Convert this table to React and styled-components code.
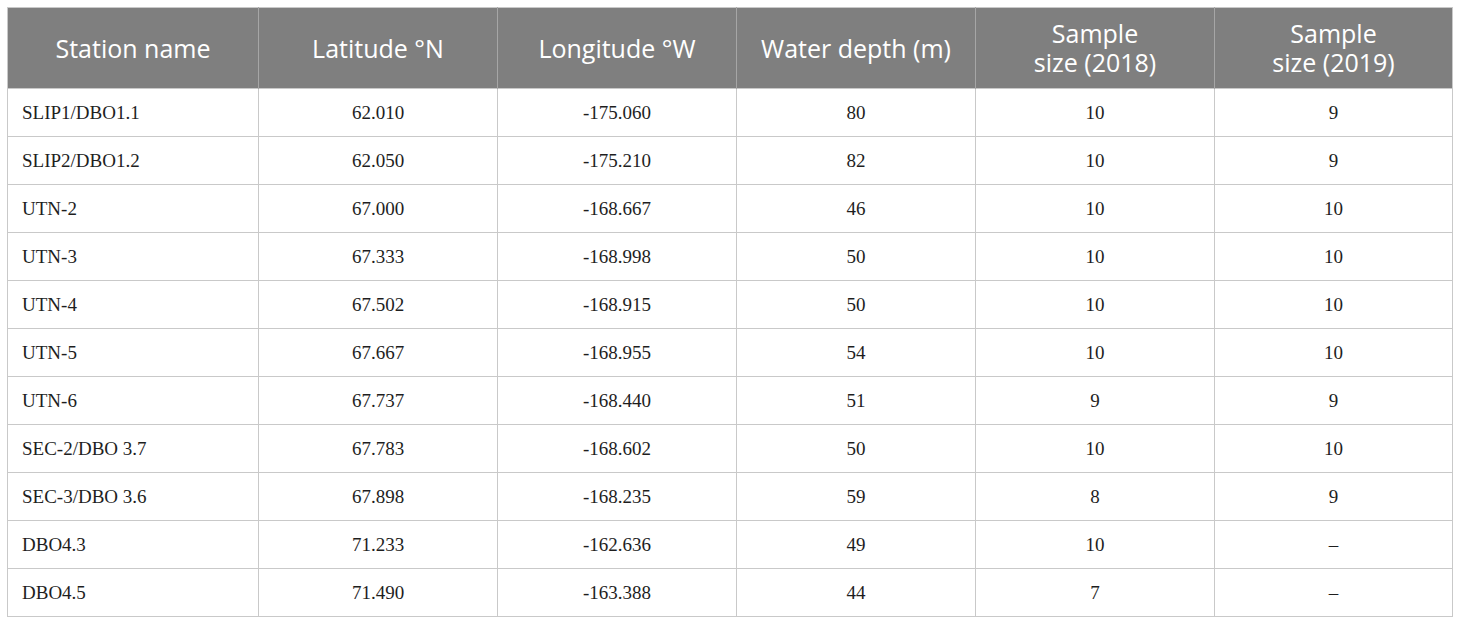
import styled, { createGlobalStyle } from "styled-components";

const GlobalStyle = createGlobalStyle`
    body {
        margin: 0;
        background: #ffffff;
    }
`

const rows = [
    ["SLIP1/DBO1.1", "62.010", "-175.060", "80", "10", "9"],
    ["SLIP2/DBO1.2", "62.050", "-175.210", "82", "10", "9"],
    ["UTN-2", "67.000", "-168.667", "46", "10", "10"],
    ["UTN-3", "67.333", "-168.998", "50", "10", "10"],
    ["UTN-4", "67.502", "-168.915", "50", "10", "10"],
    ["UTN-5", "67.667", "-168.955", "54", "10", "10"],
    ["UTN-6", "67.737", "-168.440", "51", "9", "9"],
    ["SEC-2/DBO 3.7", "67.783", "-168.602", "50", "10", "10"],
    ["SEC-3/DBO 3.6", "67.898", "-168.235", "59", "8", "9"],
    ["DBO4.3", "71.233", "-162.636", "49", "10", "–"],
    ["DBO4.5", "71.490", "-163.388", "44", "7", "–"],
]

const widths = [251, 239, 239, 239, 239, 238]

export default function App (){
    return(
        <Page>
            <GlobalStyle />
            <Table>
                <colgroup>
                    {widths.map((w, i) => <col key={i} style={{ width: w }} />)}
                </colgroup>
                <thead>
                    <tr>
                        <Head>Station name</Head>
                        <Head>Latitude °N</Head>
                        <Head>Longitude °W</Head>
                        <Head>Water depth (m)</Head>
                        <Head>Sample<br />size (2018)</Head>
                        <Head>Sample<br />size (2019)</Head>
                    </tr>
                </thead>
                <tbody>
                    {rows.map((r) => (
                        <Row key={r[0]}>
                            {r.map((c, i) => <Cell key={i} $left={i === 0}>{c}</Cell>)}
                        </Row>
                    ))}
                </tbody>
            </Table>
        </Page>
    )
}

const Page = styled.div`
    padding: 7px 0 0 7px;
`
const Table = styled.table`
    border-collapse: collapse;
    table-layout: fixed;
    width: 1446px;
    border: 1px solid #c9c9c9;
`
const Head = styled.th`
    height: 80px;
    padding: 0 8px;
    background: #7f7f7f;
    color: #ffffff;
    font-family: "Open Sans", "Noto Sans", sans-serif;
    font-weight: 400;
    font-size: 25px;
    line-height: 29px;
    text-align: center;
    vertical-align: middle;
    border-left: 1px solid #a6a6a6;
    &:first-child {
        border-left: none;
    }
`
const Row = styled.tr`
    height: 48px;
`
const Cell = styled.td`
    padding: 0 14px;
    border: 1px solid #c9c9c9;
    color: #1e1e1e;
    font-family: "Liberation Serif", "Times New Roman", serif;
    font-size: 19px;
    text-align: ${(p) => (p.$left ? "left" : "center")};
    vertical-align: middle;
    white-space: nowrap;
`
